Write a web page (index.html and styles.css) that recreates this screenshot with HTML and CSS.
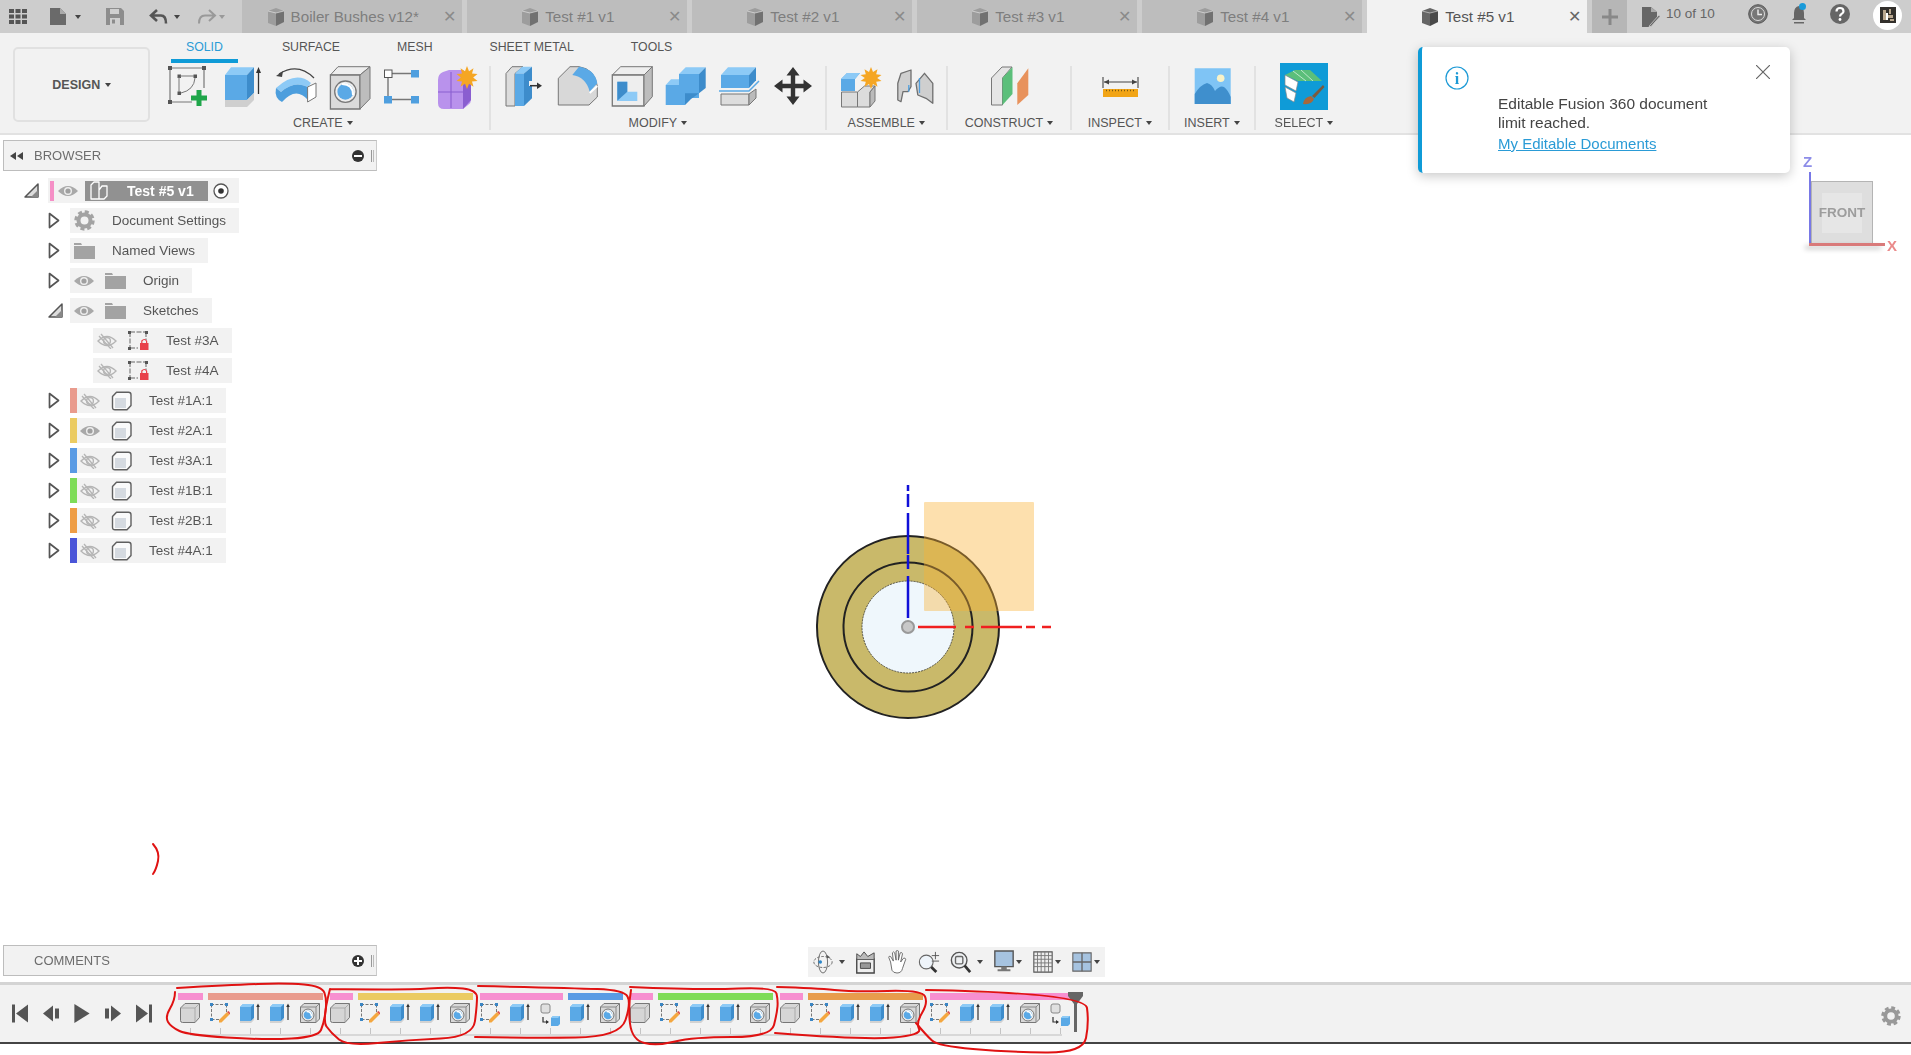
FILE: index.html
```html
<!DOCTYPE html>
<html lang="en">
<head>
<meta charset="utf-8">
<title>Test #5 v1</title>
<link rel="stylesheet" href="styles.css">
</head>
<body>
<svg class="defs" width="0" height="0" aria-hidden="true">
  <symbol id="docicon" viewBox="0 0 20 20"><path d="M2 4 10 1l8 3v11l-8 4-8-3z" fill="currentColor"/><path d="M10 6v13l8-4V4z" fill="#000" opacity=".28"/><path d="M2 4l8 2 8-2" fill="none" stroke="#fff" stroke-width=".7" opacity=".7"/></symbol>
  <symbol id="eye" viewBox="0 0 20 14"><path d="M0 7Q10-3 20 7 10 17 0 7z" fill="#a9a9a9"/><circle cx="10" cy="7" r="4" fill="#eee"/><circle cx="10" cy="7" r="2.6" fill="#a0a0a0"/></symbol>
  <symbol id="eyeoff" viewBox="0 0 20 16"><path d="M1 8Q10-1 19 8 10 17 1 8z" fill="none" stroke="#b5b5b5" stroke-width="1.4"/><circle cx="10" cy="8" r="3.4" fill="none" stroke="#b5b5b5" stroke-width="1.4"/><path d="M4 1l12 14M2 3l12 13" stroke="#b5b5b5" stroke-width="1.3"/></symbol>
  <symbol id="folder" viewBox="0 0 21 16"><path d="M0 0h7l1 2h-8zM0 3h21v13H0z" fill="#a3a3a3"/></symbol>
  <symbol id="twist" viewBox="0 0 12 17"><path d="M1.5 1.5 10.5 8.5 1.5 15.5z" fill="#fff" stroke="#555" stroke-width="1.7" stroke-linejoin="round"/></symbol>
  <symbol id="twistopen" viewBox="0 0 15 15"><path d="M14 1V14H1z" fill="#ddd" stroke="#555" stroke-width="1.5" stroke-linejoin="round"/><path d="M14 7V14H7z" fill="#888"/></symbol>
  <symbol id="compcube" viewBox="0 0 21 20"><path d="M1.500 5.500 5.500 1.200h12q2.500 0 2.500 2.500v10.800l-4 4.300H4q-2.500 0-2.500-2.500z" fill="#fafafa" stroke="#5f5f5f" stroke-width="1.400" stroke-linejoin="round"/><path d="M4 7h11v10H4z" fill="#d5dae0"/></symbol>
  <symbol id="lockedsketch" viewBox="0 0 21 20"><path d="M2 1h16M2 1v16M2 17h8M18 1v8" stroke="#666" stroke-width="1" stroke-dasharray="5 1.500" fill="none"/><path d="M0 0h3v3H0zM17 0h3v3h-3zM0 16h3v3H0z" fill="#555"/><rect x="12" y="12" width="8.500" height="7" fill="#e8404a"/><path d="M13.800 12V10q2.500-3 4.800 0v2" fill="none" stroke="#e8404a" stroke-width="1.200"/></symbol>
  <symbol id="tlcube" viewBox="0 0 20 20"><path d="M.5 5 5 .5h14.500v14l-4.500 5H2.500q-2 0-2-2z" fill="#d6d6d6" stroke="#777"/><path d="M.5 5H15l4.500-4.500M15 5v14.500" fill="none" stroke="#999" stroke-width=".7"/></symbol>
  <symbol id="tlsketch" viewBox="0 0 20 20"><path d="M1 1.500h16M1.500 1.500v15M1.500 16.500h9M16.500 1.500v8" stroke="#777" fill="none" stroke-dasharray="3 1.500"/><path d="M0 0h3v3H0zM15 0h3v3h-3zM0 15h3v3H0z" fill="#3b86c4"/><path d="M9 17 17 9l2.500 2.500-8 8H9z" fill="#f4a740"/><path d="M17 9l2.500 2.500 1-1.500L18.500 8z" fill="#e0504a"/></symbol>
  <symbol id="tlextrude" viewBox="0 0 20 20"><path d="M0 4 3 1h11v14l-3 3H0z" fill="#5aa9e6"/><path d="M0 4 3 1h11l-3 3z" fill="#8dcaf6"/><path d="M11 4l3-3v14l-3 3z" fill="#3d8ccb"/><path d="M0 18h11l3-3v2l-3 3H0z" fill="#d2d2d2"/><path d="M18 17V2" stroke="#333" stroke-width="1.200"/><path d="M16.200 4 18 .5 19.800 4z" fill="#333"/></symbol>
  <symbol id="tlhole" viewBox="0 0 20 20"><path d="M.5 4 4 .5h15.500v15.500l-3.500 3.500H.5z" fill="#d8d8d8" stroke="#777"/><path d="M.5 4H16L19.500.5M16 4v15.500" fill="none" stroke="#888"/><circle cx="8" cy="12" r="6" fill="#eee" stroke="#777"/><circle cx="8" cy="12" r="4.300" fill="#5aa9e6"/><path d="M6.500 8.500q5 0 5 5" fill="none" stroke="#fff" stroke-width="1.500"/></symbol>
  <symbol id="tlmove" viewBox="0 0 20 24"><rect x="1" y="1" width="9" height="9" rx="2" fill="#e0e0e0" stroke="#888"/><path d="M3 14v5h5" fill="none" stroke="#333" stroke-width="1.200"/><path d="M6 17l3 2-3 2z" fill="#333"/><path d="M11 15l2-2h7v8l-2 2h-7z" fill="#5aa9e6"/><path d="M11 15l2-2h7l-2 2z" fill="#8dcaf6"/></symbol>
</svg>

<div class="app">
  <header class="topbar">
    <div class="quick">
      <svg class="qi-grid" viewBox="0 0 18 15"><path d="M0 0h5v4H0zM6.500 0h5v4h-5zM13 0h5v4h-5zM0 5.500h5v4H0zM6.500 5.500h5v4h-5zM13 5.500h5v4h-5zM0 11h5v4H0zM6.500 11h5v4h-5zM13 11h5v4h-5z" fill="#555"/></svg>
      <svg class="qi-file" viewBox="0 0 16 17"><path d="M0 0h10l6 6v11H0z" fill="#6a6a6a"/><path d="M10 0v6h6z" fill="#aaa"/></svg>
      <i class="caret dark"></i>
      <svg class="qi-save" viewBox="0 0 18 17"><path d="M0 0h15l3 3v14H0z" fill="#8d8d8d"/><path d="M4 1h9v5H4z" fill="#cfcfcf"/><path d="M4 10h10v7H4z" fill="#cfcfcf"/><path d="M6 11.500h3v4H6z" fill="#8d8d8d"/></svg>
      <svg class="qi-undo" viewBox="0 0 22 16"><path d="M8 1 2 6.500 8 12M3 6.500h9q5 0 5 8" fill="none" stroke="#555" stroke-width="2.600"/></svg>
      <i class="caret dark"></i>
      <svg class="qi-redo" viewBox="0 0 22 16"><path d="M14 1l6 5.500L14 12M19 6.500h-9q-6 0-6 8" fill="none" stroke="#999" stroke-width="2"/></svg>
      <i class="caret light"></i>
    </div>
    <nav class="doctabs">
      <div class="doctab"><span class="doctab-main"><svg class="doctab-icon"><use href="#docicon"/></svg>Boiler Bushes v12*</span><span class="doctab-x">✕</span></div>
      <div class="doctab"><span class="doctab-main"><svg class="doctab-icon"><use href="#docicon"/></svg>Test #1 v1</span><span class="doctab-x">✕</span></div>
      <div class="doctab"><span class="doctab-main"><svg class="doctab-icon"><use href="#docicon"/></svg>Test #2 v1</span><span class="doctab-x">✕</span></div>
      <div class="doctab"><span class="doctab-main"><svg class="doctab-icon"><use href="#docicon"/></svg>Test #3 v1</span><span class="doctab-x">✕</span></div>
      <div class="doctab"><span class="doctab-main"><svg class="doctab-icon"><use href="#docicon"/></svg>Test #4 v1</span><span class="doctab-x">✕</span></div>
      <div class="doctab active"><span class="doctab-main"><svg class="doctab-icon"><use href="#docicon"/></svg>Test #5 v1</span><span class="doctab-x">✕</span></div>
      <div class="newtab"><svg viewBox="0 0 16 16" width="16" height="16"><path d="M6.500 0h3v6.500H16v3H9.500V16h-3V9.500H0v-3h6.500z" fill="#888"/></svg></div>
    </nav>
    <div class="status">
      <svg class="st-edit" viewBox="0 0 18 20"><path d="M0 0h9l6 5v6L7 20H0z" fill="#666"/><path d="M9 0v5h6z" fill="#aaa"/><path d="M8 18l9-10 1 1.500-9 10H7z" fill="#666" stroke="#cbcbcb" stroke-width=".8"/></svg>
      <span class="st-count">10 of 10</span>
      <svg class="st-clock" viewBox="0 0 20 20"><circle cx="10" cy="10" r="9.300" fill="#777" stroke="#555" stroke-width="1"/><circle cx="10" cy="10" r="6.500" fill="none" stroke="#ddd" stroke-width="1"/><path d="M10 5.500V10.500H14" fill="none" stroke="#eee" stroke-width="1.400"/></svg>
      <svg class="st-bell" viewBox="0 0 20 22"><path d="M10 3q5 1 5 7v5l2 2H3l2-2v-5q0-6 5-7z" fill="#666"/><path d="M5 19h10v1.500H5z" fill="#666"/><circle cx="13.500" cy="3.500" r="3.500" fill="#1a9ad9"/></svg>
      <svg class="st-help" viewBox="0 0 20 20"><circle cx="10" cy="10" r="10" fill="#666"/><path d="M6.500 7.500q0-3.500 3.500-3.500t3.500 3.200q0 1.800-2 2.800-1.500.8-1.500 2.500" fill="none" stroke="#fff" stroke-width="2.200"/><circle cx="10" cy="15.500" r="1.400" fill="#fff"/></svg>
      <div class="avatar"><svg viewBox="0 0 16 16" width="16" height="16"><path d="M0 0h16v16H0z" fill="#33302c"/><path d="M3 3h3v10H3zM9 2h2v5H9zM8 8h5v3H8zM10 12h4v2h-4z" fill="#b9a78f"/><path d="M6 6h2v7H6z" fill="#fff"/></svg></div>
    </div>
  </header>

  <section class="toolbar">
    <button class="workspace">DESIGN <i class="caret dark"></i></button>
    <div class="ribbon">
      <div class="ribbon-tabs">
        <span class="rtab on">SOLID</span><span class="rtab">SURFACE</span><span class="rtab">MESH</span><span class="rtab">SHEET METAL</span><span class="rtab">TOOLS</span>
      </div>
      <div class="groups">
        <div class="group g-create">
          <div class="tools narrow">
            <svg class="tool" viewBox="0 0 44 44"><path d="M3 2h34M3 2v34M3 36h22M37 2v20" stroke="#777" stroke-width="1.200" fill="none"/><path d="M1 0h4v4H1zM35 0h4v4h-4zM1 34h4v4H1zM10.500 8.500h3.500v3.500h-3.500zM26.500 8.500H30v3.500h-3.500zM10.500 25.500h3.500V29h-3.500z" fill="#555"/><path d="M12 11v15M13 10h14M28 12Q27 24 14 27" fill="none" stroke="#777"/><path d="M32 24v16M24 32h16" stroke="#1fa64a" stroke-width="5"/></svg>
            <svg class="tool" viewBox="0 0 44 44"><path d="M4 9 10 1.300h23L26 9z" fill="#8dcaf6"/><path d="M4 9h22v25H4z" fill="#5aa9e6"/><path d="M26 9l7-7.700V27l-7 7z" fill="#3d8ccb"/><path d="M4 34h22l7-7v7l-7 7H4z" fill="#cfcfcf"/><path d="M37.500 28V4" stroke="#333" stroke-width="1.300"/><path d="M35 7l2.500-6L40 7z" fill="#333"/></svg>
            <svg class="tool" viewBox="0 0 44 44"><path d="M2 22Q22 4 37 17L34 21Q20 14 7 26z" fill="#8dcaf6"/><path d="M2 22 7 26Q20 14 34 21V34Q22 20 8 36 0 32 2 22z" fill="#4c9edd"/><path d="M33.600 21 42 17v14l-8.400 5z" fill="#fff" stroke="#777"/><path d="M40 12Q24-4 5 8" fill="none" stroke="#444" stroke-width="1.300"/><path d="M2 10l7-5-1 6z" fill="#444"/></svg>
            <svg class="tool" viewBox="0 0 44 44"><path d="M2.400 9 10 .7h32L32 9z" fill="#eee" stroke="#777"/><path d="M2.400 9H32v34H2.400z" fill="#dbdbdb" stroke="#777" stroke-width="1.300"/><path d="M32 9 42 .7v32L32 43z" fill="#bdbdbd" stroke="#777"/><circle cx="17.400" cy="25.700" r="10.700" fill="#eee" stroke="#777" stroke-width="1.300"/><circle cx="17.400" cy="25.700" r="8" fill="#5aa9e6"/><path d="M14 18q11 0 11 11" fill="none" stroke="#fff" stroke-width="2"/></svg>
            <svg class="tool" viewBox="0 0 44 44"><path d="M11 7.500h19M7 11.500v19M11 33.500h19" stroke="#777" stroke-width="1.400"/><rect x="3.500" y="4" width="7.500" height="7.500" fill="#fff" stroke="#555"/><path d="M30 4h8v7.500h-8zM3 30h8v7.500H3zM30 30h8v7.500h-8z" fill="#4f9fdf"/></svg>
            <svg class="tool" viewBox="0 0 44 44"><path d="M3 14Q3 8 8 6L14 4h14l8 8v22q0 3-3 5l-5 4H9q-6 0-6-6z" fill="#b992ec"/><path d="M28 14l8-2v22l-8 9z" fill="#8a5ed0"/><path d="M3 26h25M16 6v36" stroke="#8a5ed0" stroke-width="1.100" fill="none"/><path d="M32 0l2 5.200 4.500-3-1.500 5.300 5.500.5-4.300 3.500 4.300 3.500-5.500.5 1.500 5.300-4.500-3-2 5.200-2-5.200-4.500 3 1.500-5.300-5.500-.5 4.300-3.500-4.300-3.500 5.500-.5-1.500-5.300 4.500 3z" fill="#f5a623"/></svg>
          </div>
          <div class="glabel">CREATE <i class="caret dark"></i></div>
        </div>
        <div class="group g-modify">
          <div class="tools">
            <svg class="tool" viewBox="0 0 44 44"><path d="M5 7.500 11 .7h11L14 7.500V40H5z" fill="#dcdcdc" stroke="#777"/><path d="M14 7.500 21 .7h10l-8 6.800z" fill="#8dcaf6"/><path d="M14 7.500h9V40h-9z" fill="#5aa9e6"/><path d="M23 7.500l8-6.800v31.600L23 40z" fill="#3d8ccb"/><path d="M28 17.500h9" stroke="#f2f2f2" stroke-width="5"/><path d="M29 19.700h8" stroke="#333" stroke-width="1.500"/><path d="M36 16.500l5 3.200-5 3.200z" fill="#333"/></svg>
            <svg class="tool" viewBox="0 0 44 44"><path d="M3.300 12.300 15 .7h9Q40 3 42.300 20v11L34 39H3.300z" fill="#d8d8d8" stroke="#777"/><path d="M17.300 9 24 .7Q40 3 42.300 17.300L34.700 25.700Q31 11 17.300 9z" fill="#5aa9e6"/><path d="M34.700 27 42.300 20" stroke="#fff" stroke-width="2"/></svg>
            <svg class="tool" viewBox="0 0 44 44"><path d="M3.300 9 11.700.7h31.600L35 9z" fill="#eee" stroke="#777"/><path d="M3.300 9H35v31H3.300z" fill="#eee" stroke="#777" stroke-width="1.300"/><path d="M35 9l8.300-8.300v30L35 40z" fill="#bdbdbd" stroke="#777"/><path d="M8.300 15.700h10v10h10v9.300H8.300z" fill="#8dcaf6"/><path d="M8.300 15.700h10v10l-10 9z" fill="#3d8ccb"/></svg>
            <svg class="tool" viewBox="0 0 44 44"><path d="M16 8 22.700 1.300h20L36 8z" fill="#8dcaf6"/><path d="M16 8h20v24H16z" fill="#5aa9e6"/><path d="M36 8l6.700-6.700V22L36 27.300z" fill="#3d8ccb"/><path d="M2.700 19 8 13.300h8V19z" fill="#8dcaf6"/><path d="M2.700 19H22v20H2.700z" fill="#5aa9e6"/><path d="M22 27.300h14L28 33l-6 6z" fill="#3d8ccb"/></svg>
            <svg class="tool" viewBox="0 0 44 44"><path d="M4 9 11 1.300h28L32 9z" fill="#8dcaf6"/><path d="M4 9h28v13H4z" fill="#5aa9e6"/><path d="M32 9l7-7.700v13L32 22z" fill="#3d8ccb"/><path d="M2 25H32L42 15" fill="none" stroke="#5aa9e6" stroke-width="1.500"/><path d="M4 28H32V39H4z" fill="#ddd" stroke="#777"/><path d="M32 28l7-5v9l-7 7z" fill="#bbb" stroke="#777"/></svg>
            <svg class="tool" viewBox="0 0 44 44"><path d="M22 1l6.500 8.500H24.200v8.300h8.300v-4.300L41 20l-8.500 6.500v-4.300h-8.300v8.300h4.300L22 39l-6.500-8.500h4.300v-8.300h-8.300v4.300L3 20l8.500-6.500v4.300h8.300V9.500h-4.300z" fill="#333"/></svg>
          </div>
          <div class="glabel">MODIFY <i class="caret dark"></i></div>
        </div>
        <div class="group">
          <div class="tools">
            <svg class="tool" viewBox="0 0 44 44"><path d="M3 25V13l6-6h13l-5 6v12z" fill="#5aa9e6"/><path d="M3 13l6-6h13l-5 6z" fill="#8dcaf6"/><path d="M3.500 26h16v15h-16z" fill="#dcdcdc" stroke="#777"/><path d="M19.500 26l7-6h10.500l-5 6v15h-12.500z" fill="#dcdcdc" stroke="#777"/><path d="M32 26l5-6v15l-5 6z" fill="#bbb" stroke="#777"/><path d="M33 1l2 5 4.500-2.800-1.300 5 5.300.8-4.300 3 4.300 3-5.300.8 1.300 5-4.500-2.800-2 5-2-5-4.500 2.800 1.300-5-5.300-.8 4.300-3-4.300-3 5.300-.8-1.300-5L31 6z" fill="#f5a623"/></svg>
            <svg class="tool" viewBox="0 0 44 44"><path d="M5.800 17.300 9 7.300 19 4v16.700l-3 5H11L9 35.700 5.800 34z" fill="#cfcfcf" stroke="#6f6f6f" stroke-width="1.300" stroke-linejoin="round"/><path d="M24 17.300 32.500 7.300l8.300 10v20l-6.800-5-8.200-3.300z" fill="#cfcfcf" stroke="#6f6f6f" stroke-width="1.300" stroke-linejoin="round"/><path d="M16.800 19v6.700M27.500 12v15" stroke="#4f9fdf" stroke-width="1.300"/></svg>
          </div>
          <div class="glabel">ASSEMBLE <i class="caret dark"></i></div>
        </div>
        <div class="group">
          <div class="tools">
            <svg class="tool" viewBox="0 0 44 44"><path d="M4.500 12 15 1h10L15.500 12v27h-11z" fill="#e5e5e5" stroke="#777"/><path d="M15.500 12 25.500 1v27l-10 11z" fill="#5bbf7a"/><path d="M30.300 17.300 41.300 2.300v26.700L30.300 39z" fill="#e8925c"/></svg>
          </div>
          <div class="glabel">CONSTRUCT <i class="caret dark"></i></div>
        </div>
        <div class="group">
          <div class="tools">
            <svg class="tool" viewBox="0 0 44 44"><path d="M5 11v11M40 11v11M6 16h33" stroke="#444" stroke-width="1.100"/><path d="M6 16l5-2.500v5zM39 16l-5-2.500v5z" fill="#444"/><path d="M5 23h35v8H5z" fill="#f2a516"/><path d="M8 24.500h29" stroke="#7a5a10" stroke-dasharray="1 2" stroke-width="1.500"/></svg>
          </div>
          <div class="glabel">INSPECT <i class="caret dark"></i></div>
        </div>
        <div class="group">
          <div class="tools">
            <svg class="tool" viewBox="0 0 44 44"><path d="M4.700 2.300h36V38h-36z" fill="#7fc4f5"/><path d="M4.700 38V28Q10 19 17 17q5 1 8 8 5-6 9-4 4 3 6.700 10v7z" fill="#3f8fcd"/><circle cx="30.700" cy="12.300" r="3.800" fill="#f8f2c8"/></svg>
          </div>
          <div class="glabel">INSERT <i class="caret dark"></i></div>
        </div>
        <div class="group">
          <div class="tools">
            <svg class="tool-select" viewBox="0 0 48 47"><path d="M0 0h48v47H0z" fill="#0f9bd7"/><path d="M5 12 15 7h15l12 11H18z" fill="#5bbf7a"/><path d="M13 8l13 10M21 7l12 11" stroke="#d5f0dd" stroke-width=".8"/><path d="M5 12l13 7-2 9-11-6zM5 24l11 6-2 9-7-4z" fill="#fff" stroke="#888" stroke-width=".7"/><path d="M32 33 43 22l1.500 2-10 11z" fill="#7c5a3c"/><path d="M23 41q1-7 8-8l3 3q-2 6-11 5z" fill="#a8683a"/></svg>
          </div>
          <div class="glabel">SELECT <i class="caret dark"></i></div>
        </div>
      </div>
    </div>
  </section>

  <main class="stage">
    <aside class="panel panel-browser">
      <svg class="collapse" viewBox="0 0 13 8"><path d="M6 0v8L0 4zM13 0v8L7 4z" fill="#444"/></svg>
      <span class="panel-title">BROWSER</span>
      <i class="pill minus"></i><i class="grip"></i>
    </aside>
    <div class="tree">
      <div class="row root">
        <svg class="twist-open"><use href="#twistopen"/></svg>
        <div class="node node-root">
          <i class="swatch-root"></i>
          <svg class="ic-eye"><use href="#eye"/></svg>
          <div class="selected">
            <svg class="comp-ic" viewBox="0 0 18 19"><path d="M1 4 4 1h5v17H1zM9 9l3-4h5v10l-3 3H9z" fill="#8f8f8f" stroke="#fff" stroke-width="1.300" stroke-linejoin="round"/></svg>
            <span>Test #5 v1</span>
          </div>
          <svg class="radio" viewBox="0 0 16 16"><circle cx="8" cy="8" r="7" fill="#fff" stroke="#555" stroke-width="1.300"/><circle cx="8" cy="8" r="2.800" fill="#333"/></svg>
        </div>
      </div>
      <div class="row l1">
        <svg class="twist"><use href="#twist"/></svg>
        <div class="node">
          <svg class="ic-gear" viewBox="0 0 21 21"><circle cx="10.500" cy="10.500" r="6" fill="none" stroke="#a3a3a3" stroke-width="4"/><circle cx="10.500" cy="10.500" r="8.700" fill="none" stroke="#a3a3a3" stroke-width="3" stroke-dasharray="4 2.830"/></svg>
          <span class="label">Document Settings</span>
        </div>
      </div>
      <div class="row l1">
        <svg class="twist"><use href="#twist"/></svg>
        <div class="node"><svg class="ic-folder first"><use href="#folder"/></svg><span class="label">Named Views</span></div>
      </div>
      <div class="row l1">
        <svg class="twist"><use href="#twist"/></svg>
        <div class="node"><svg class="ic-eye"><use href="#eye"/></svg><svg class="ic-folder"><use href="#folder"/></svg><span class="label">Origin</span></div>
      </div>
      <div class="row l1">
        <svg class="twist-open small"><use href="#twistopen"/></svg>
        <div class="node"><svg class="ic-eye"><use href="#eye"/></svg><svg class="ic-folder"><use href="#folder"/></svg><span class="label">Sketches</span></div>
      </div>
      <div class="row l2">
        <div class="node"><svg class="ic-eye"><use href="#eyeoff"/></svg><svg class="ic-item"><use href="#lockedsketch"/></svg><span class="label">Test #3A</span></div>
      </div>
      <div class="row l2">
        <div class="node"><svg class="ic-eye"><use href="#eyeoff"/></svg><svg class="ic-item"><use href="#lockedsketch"/></svg><span class="label">Test #4A</span></div>
      </div>
      <div class="row l1">
        <svg class="twist"><use href="#twist"/></svg>
        <div class="node body"><i class="swatch c-salmon"></i><svg class="ic-eye"><use href="#eyeoff"/></svg><svg class="ic-item"><use href="#compcube"/></svg><span class="label">Test #1A:1</span></div>
      </div>
      <div class="row l1">
        <svg class="twist"><use href="#twist"/></svg>
        <div class="node body"><i class="swatch c-yellow"></i><svg class="ic-eye"><use href="#eye"/></svg><svg class="ic-item"><use href="#compcube"/></svg><span class="label">Test #2A:1</span></div>
      </div>
      <div class="row l1">
        <svg class="twist"><use href="#twist"/></svg>
        <div class="node body"><i class="swatch c-blue"></i><svg class="ic-eye"><use href="#eyeoff"/></svg><svg class="ic-item"><use href="#compcube"/></svg><span class="label">Test #3A:1</span></div>
      </div>
      <div class="row l1">
        <svg class="twist"><use href="#twist"/></svg>
        <div class="node body"><i class="swatch c-green"></i><svg class="ic-eye"><use href="#eyeoff"/></svg><svg class="ic-item"><use href="#compcube"/></svg><span class="label">Test #1B:1</span></div>
      </div>
      <div class="row l1">
        <svg class="twist"><use href="#twist"/></svg>
        <div class="node body"><i class="swatch c-orange"></i><svg class="ic-eye"><use href="#eyeoff"/></svg><svg class="ic-item"><use href="#compcube"/></svg><span class="label">Test #2B:1</span></div>
      </div>
      <div class="row l1">
        <svg class="twist"><use href="#twist"/></svg>
        <div class="node body"><i class="swatch c-indigo"></i><svg class="ic-eye"><use href="#eyeoff"/></svg><svg class="ic-item"><use href="#compcube"/></svg><span class="label">Test #4A:1</span></div>
      </div>
    </div>

    <div class="stage-bottom">
      <aside class="panel panel-comments">
        <span class="panel-title">COMMENTS</span>
        <i class="pill plus"></i><i class="grip"></i>
      </aside>
      <div class="navbar">
        <svg class="nv" viewBox="0 0 24 26"><ellipse cx="12" cy="13" rx="10" ry="6" fill="none" stroke="#666" stroke-dasharray="3 1.500"/><ellipse cx="12" cy="13" rx="5" ry="12" fill="none" stroke="#666"/><circle cx="9" cy="13" r="2" fill="#2b86c9"/><path d="M16 5l4 3-4 1z" fill="#555"/></svg><i class="caret dark tight"></i>
        <svg class="nv" viewBox="0 0 24 26"><path d="M3 10h19v15H3z" fill="#eee" stroke="#444" stroke-width="1.500"/><path d="M7 14h11v6H7z" fill="#999" stroke="#444"/><path d="M3 10V4l4 3 4-5 4 5 7-4v7" fill="#bbb" stroke="#444"/></svg>
        <svg class="nv" viewBox="0 0 24 26"><path d="M5 13 3 8q0-2 2-1l3 5L7 3q1-2 2.500 0l1.500 8V1q1.500-1 2.500 0v10l2-8q2-1 2.500 1L16 13l3-4q2-1 2.500 1L18 20q-1 5-6 5-4 0-5.500-3z" fill="#fff" stroke="#555" stroke-width=".9" stroke-linejoin="round"/></svg>
        <svg class="nv" viewBox="0 0 24 26"><circle cx="9" cy="13" r="7.500" fill="#eef4fa" stroke="#666" stroke-width="1.200"/><path d="M14.500 18.500 20 24" stroke="#333" stroke-width="3"/><path d="M15 6h8M19 2v8M15 12h8" stroke="#555" stroke-width="1"/></svg>
        <svg class="nv" viewBox="0 0 24 26"><circle cx="10" cy="11" r="8.500" fill="#eef0f2" stroke="#555" stroke-width="1.500"/><rect x="6" y="7" width="8" height="8" rx="1.500" fill="none" stroke="#666" stroke-width="1.500"/><path d="M16 17l6 7" stroke="#333" stroke-width="3"/></svg><i class="caret dark tight2"></i>
        <svg class="nv" viewBox="0 0 24 26"><path d="M2 1h20v17H2z" fill="#a6c3e0" stroke="#555" stroke-width="1.500"/><path d="M9 18h6v3h4v2H5v-2h4z" fill="#777"/></svg><i class="caret dark tight3"></i>
        <svg class="nv" viewBox="0 0 24 26"><path d="M2 2h20v22H2z" fill="#eee" stroke="#555" stroke-width="1.200"/><path d="M6 2v22M10 2v22M14 2v22M18 2v22M2 6h20M2 10h20M2 14h20M2 18h20" stroke="#777"/></svg><i class="caret dark tight3"></i>
        <svg class="nv" viewBox="0 0 24 26"><path d="M2 3h20v20H2z" fill="#a6c3e0" stroke="#666" stroke-width="1.200"/><path d="M12 3v20M2 13h20" stroke="#666" stroke-width="1.500"/></svg><i class="caret dark tight3"></i>
      </div>
    </div>

    <svg class="drawing" viewBox="0 0 200 210" aria-label="Sketch canvas">
      <circle cx="100" cy="105" r="91" fill="#c9b96a" stroke="#222" stroke-width="2"/>
      <circle cx="100" cy="105" r="64.500" fill="none" stroke="#222" stroke-width="2"/>
      <circle cx="100" cy="105" r="46" fill="#eff7fc" stroke="#333" stroke-width=".8" stroke-dasharray="2 1"/>
      <rect x="116" y="-20" width="110" height="109" rx="1" fill="#f9b234" opacity=".4"/>
      <path d="M100 -37V96" stroke="#1010d8" stroke-width="2.500" stroke-dasharray="6 3 13 6 41 1 14 7 42"/>
      <path d="M110 105H243" stroke="#f02020" stroke-width="2.500" stroke-dasharray="38 9 9 7 41 4 9 7 9"/>
      <circle cx="100" cy="105" r="6" fill="#c8c8c8" stroke="#999" stroke-width="2"/>
    </svg>

    <div class="notice">
      <svg class="notice-i" viewBox="0 0 24 24"><circle cx="12" cy="12" r="11" fill="#fff" stroke="#1d9ad6" stroke-width="1.200"/><text x="12" y="18" text-anchor="middle" class="notice-i-text">i</text></svg>
      <svg class="notice-x" viewBox="0 0 14 14"><path d="M0 0 14 14M14 0 0 14" stroke="#666" stroke-width="1.200"/></svg>
      <p class="notice-text">Editable Fusion 360 document<br>limit reached.</p>
      <a class="notice-link" href="#">My Editable Documents</a>
    </div>

    <div class="viewcube">
      <span class="vc-z">Z</span>
      <div class="vc-face"><span>FRONT</span></div>
      <i class="vc-zaxis"></i>
      <i class="vc-xaxis"></i>
      <span class="vc-x">X</span>
    </div>
  </main>

  <footer class="timeline">
    <div class="playback">
      <svg class="pb" viewBox="0 0 16 18"><path d="M0 0h3v18H0zM16 0v18L4 9z" fill="#555"/></svg>
      <svg class="pb" viewBox="0 0 16 18"><path d="M10 1v16L0 9z" fill="#555"/><path d="M12 4h4v10h-4z" fill="#555"/></svg>
      <svg class="pb" viewBox="0 0 16 20"><path d="M0 0l16 10L0 20z" fill="#555"/></svg>
      <svg class="pb" viewBox="0 0 16 18"><path d="M6 1v16l10-8z" fill="#555"/><path d="M0 4h4v10H0z" fill="#555"/></svg>
      <svg class="pb" viewBox="0 0 16 18"><path d="M0 0v18l12-9zM13 0h3v18h-3z" fill="#555"/></svg>
    </div>
    <div class="track">
      <div class="segs">
        <i class="seg w25 c-pink"></i><i class="seg w115 c-salmon end"></i>
        <i class="seg w23 c-pink"></i><i class="seg w115 c-yellow end"></i>
        <i class="seg w83 c-pink"></i><i class="seg w55 c-blue end"></i>
        <i class="seg w23 c-pink"></i><i class="seg w115 c-green end"></i>
        <i class="seg w23 c-pink"></i><i class="seg w115 c-orange2 end"></i>
        <i class="seg w141 c-pink"></i>
      </div>
      <div class="feats">
        <svg class="ft"><use href="#tlcube"/></svg><svg class="ft"><use href="#tlsketch"/></svg><svg class="ft"><use href="#tlextrude"/></svg><svg class="ft"><use href="#tlextrude"/></svg><svg class="ft"><use href="#tlhole"/></svg>
        <svg class="ft"><use href="#tlcube"/></svg><svg class="ft"><use href="#tlsketch"/></svg><svg class="ft"><use href="#tlextrude"/></svg><svg class="ft"><use href="#tlextrude"/></svg><svg class="ft"><use href="#tlhole"/></svg>
        <svg class="ft"><use href="#tlsketch"/></svg><svg class="ft"><use href="#tlextrude"/></svg><svg class="ft tall"><use href="#tlmove"/></svg><svg class="ft"><use href="#tlextrude"/></svg><svg class="ft"><use href="#tlhole"/></svg>
        <svg class="ft"><use href="#tlcube"/></svg><svg class="ft"><use href="#tlsketch"/></svg><svg class="ft"><use href="#tlextrude"/></svg><svg class="ft"><use href="#tlextrude"/></svg><svg class="ft"><use href="#tlhole"/></svg>
        <svg class="ft"><use href="#tlcube"/></svg><svg class="ft"><use href="#tlsketch"/></svg><svg class="ft"><use href="#tlextrude"/></svg><svg class="ft"><use href="#tlextrude"/></svg><svg class="ft"><use href="#tlhole"/></svg>
        <svg class="ft"><use href="#tlsketch"/></svg><svg class="ft"><use href="#tlextrude"/></svg><svg class="ft"><use href="#tlextrude"/></svg><svg class="ft"><use href="#tlhole"/></svg><svg class="ft tall"><use href="#tlmove"/></svg>
      </div>
      <div class="ruler"></div>
      <svg class="marker" viewBox="0 0 15 40"><path d="M0 0h15v4l-6 8v28H6V12L0 4z" fill="#666"/></svg>
    </div>
    <svg class="tl-gear" viewBox="0 0 21 21"><circle cx="10.500" cy="10.500" r="6" fill="none" stroke="#999" stroke-width="4"/><circle cx="10.500" cy="10.500" r="8.700" fill="none" stroke="#999" stroke-width="3" stroke-dasharray="4 2.830"/></svg>
  </footer>
  <div class="foot"></div>

  <svg class="ink" viewBox="0 0 1911 1055" aria-hidden="true">
    <path d="M153 844Q160 852 158 861T153 874"/>
    <path d="M177 988Q230 985 258 984Q286 983 304 984.500Q322 986 324.500 993Q327 1000 325.500 1011.500Q324 1023 321 1030Q318 1037 291.500 1038.500Q265 1040 226.500 1037.500Q188 1035 179.500 1031Q171 1027 168 1022Q165 1017 170 1008.500Q175 1000 175 992"/>
    <path d="M330 989Q408 990 428 988.500Q449 987 463 988.500Q477 990 477 997.500Q477 1005 475 1021Q473 1037 440.500 1038.500Q408 1040 377.500 1043Q347 1046 339 1039.500Q331 1033 326.500 1026.500Q322 1020 330 989"/>
    <path d="M478 986Q571 988 597.500 989Q624 990 627.500 996.500Q631 1003 625.500 1020Q620 1037 575.500 1037.500Q531 1038 475 1037"/>
    <path d="M630 987Q702 990 738.500 988.500Q775 987 776.500 993.500Q778 1000 777.500 1006.500Q777 1013 774 1025Q771 1037 732 1037Q693 1037 675 1041.500Q657 1046 644.500 1043Q632 1040 630 1023.500Q628 1007 631 990"/>
    <path d="M777 987Q816 988 834.500 990Q853 992 887.500 991Q922 990 925 996.500Q928 1003 922 1013Q916 1023 919 1029Q922 1035 893.500 1037.500Q865 1040 775 1033"/>
    <path d="M926 990Q1085 993 1087 1008Q1089 1023 1086 1038Q1083 1053 1045.500 1052.500Q1008 1052 973 1049Q938 1046 932 1040.500Q926 1035 916 1023"/>
  </svg>
</div>
</body>
</html>
```

FILE: styles.css
```css
* { box-sizing: border-box; }
html, body { margin: 0; padding: 0; background: #fff; }
body { font-family: "Liberation Sans", Arial, sans-serif; color: #555; }
i { display: block; }
.defs { position: absolute; }

.app { position: relative; width: 1911px; height: 1055px; overflow: hidden; display: flex; flex-direction: column; filter: blur(.3px); }

.caret { display: inline-block; width: 0; height: 0; border-left: 3px solid transparent; border-right: 3px solid transparent; border-top: 4px solid #444; vertical-align: 2px; margin-left: 1px; }
.caret.light { border-top-color: #9a9a9a; }

/* top bar */
.topbar { height: 33px; flex: none; display: flex; background: #cdcdcd; }
.quick { width: 242px; flex: none; display: flex; align-items: center; padding-left: 9px; }
.quick svg { flex: none; }
.qi-grid { width: 18px; height: 15px; margin-right: 23px; }
.qi-file { width: 16px; height: 17px; margin-right: 9px; }
.qi-save { width: 18px; height: 17px; margin-left: 25px; margin-right: 25px; }
.qi-undo { width: 22px; height: 16px; margin-right: 3px; }
.qi-redo { width: 22px; height: 16px; margin-left: 15px; margin-right: 2px; }
.quick .caret { margin-left: 0; vertical-align: 0; }
.doctabs { display: flex; gap: 5.500px; }
.doctab { width: 219.500px; height: 33px; display: flex; align-items: center; background: #bdbdbd; color: #7e7e7e; font-size: 15.200px; padding-right: 7px; }
.doctab.active { background: #f2f2f2; color: #555; }
.doctab-main { flex: 1; display: flex; align-items: center; justify-content: center; }
.doctab-icon { width: 20px; height: 20px; margin-right: 5px; color: #9d9d9d; }
.active .doctab-icon { color: #666; }
.doctab-x { width: 12px; font-size: 16px; text-align: center; color: #8a8a8a; }
.active .doctab-x { color: #666; }
.newtab { width: 35px; height: 33px; background: #b6b6b6; display: flex; align-items: center; justify-content: center; }
.status { display: flex; align-items: center; padding-left: 15px; height: 33px; }
.st-edit { width: 18px; height: 20px; margin-right: 6px; }
.st-count { font-size: 13.500px; width: 50px; color: #666; margin-bottom: 6px; }
.st-clock { width: 20px; height: 20px; margin-left: 32px; margin-bottom: 6px; }
.st-bell { width: 20px; height: 22px; margin-left: 21px; margin-bottom: 6px; }
.st-help { width: 20px; height: 20px; margin-left: 21px; margin-bottom: 6px; }
.avatar { width: 29px; height: 29px; margin-left: 23px; margin-bottom: 3px; border-radius: 50%; background: #fff; display: flex; align-items: center; justify-content: center; }

/* ribbon */
.toolbar { height: 102px; flex: none; display: flex; background: #f2f2f2; border-bottom: 2px solid #e2e2e2; }
.workspace { width: 137px; height: 75px; margin: 14px 0 0 13px; background: #f2f2f2; border: 2px solid #e1e1e1; border-radius: 5px; font: bold 12.500px "Liberation Sans", Arial, sans-serif; color: #555; }
.ribbon { margin-left: 13px; }
.ribbon-tabs { display: flex; gap: 27px; height: 30px; padding-left: 8px; }
.rtab { height: 30px; padding: 6px 15px 0; font-size: 12.300px; line-height: 16px; color: #555; }
.rtab.on { color: #2a9bd6; border-bottom: 4px solid #0f9bd7; margin-right: 2px; }
.groups { display: flex; margin-top: 3px; }
.group { display: flex; flex-direction: column; align-items: center; height: 64px; border-right: 2px solid #e2e2e2; }
.group:last-child { border-right: 0; }
.g-create { width: 328px; padding-right: 6px; }
.g-modify { width: 336px; }
.group:nth-child(3) { width: 121px; }
.group:nth-child(4) { width: 124px; }
.group:nth-child(5) { width: 98px; }
.group:nth-child(6) { width: 86px; }
.group:nth-child(7) { width: 96px; }
.tools { display: flex; height: 44px; align-items: center; }
.tool { width: 44px; height: 44px; margin: 0 5px; overflow: visible; flex: none; }
.tools.narrow .tool { margin: 0 4.750px; }
.tool-select { width: 48px; height: 47px; flex: none; margin-top: -3px; }
.glabel { margin-top: 5px; font-size: 12.500px; line-height: 16px; color: #555; white-space: nowrap; }

/* stage */
.stage { position: relative; height: 847px; flex: none; display: flex; flex-direction: column; }
.panel { width: 374px; height: 31px; flex: none; margin-left: 3px; display: flex; align-items: center; background: #f2f2f2; border: 1px solid #bdbdbd; border-right-color: #ccc; }
.panel-browser { margin-top: 5px; }
.collapse { width: 13px; height: 8px; margin-left: 6px; }
.panel-title { font-size: 13px; color: #6d6d6d; margin-left: 11px; }
.panel-comments .panel-title { margin-left: 30px; }
.pill { width: 12px; height: 12px; border-radius: 50%; background: #333; margin-left: auto; position: relative; }
.pill.minus::after { content: ""; position: absolute; left: 2px; right: 2px; top: 5px; height: 2px; background: #fff; }
.pill.plus::after { content: ""; position: absolute; left: 2px; right: 2px; top: 5px; height: 2px; background: #fff; }
.pill.plus::before { content: ""; position: absolute; top: 2px; bottom: 2px; left: 5px; width: 2px; background: #fff; }
.grip { width: 3px; height: 12px; margin: 0 2px 0 7px; border-left: 1px solid #999; border-right: 1px solid #bbb; }

.tree { padding-top: 7px; flex: 1; }
.row { display: flex; align-items: center; height: 25px; margin-bottom: 5px; }
.root { padding-left: 24px; }
.l1 { padding-left: 48px; }
.l2 { padding-left: 93px; }
.twist { width: 12px; height: 17px; flex: none; }
.twist-open { width: 15px; height: 15px; flex: none; margin-right: 9px; }
.twist-open.small { margin-right: 7px; }
.node { height: 25px; display: flex; align-items: center; gap: 11px; background: #f2f2f2; padding: 0 13px 0 4px; font-size: 13.500px; color: #555; }
.twist + .node { margin-left: 10px; }
.label { margin-left: 6px; white-space: nowrap; }
.ic-eye { width: 20px; height: 16px; flex: none; }
.ic-folder { width: 21px; height: 16px; flex: none; }
.ic-item { width: 21px; height: 20px; flex: none; }
.ic-gear { width: 21px; height: 21px; flex: none; }
.node.body { padding-left: 0; }
.swatch { width: 7px; height: 25px; margin-right: -8px; flex: none; }
.node-root { padding: 0 10px 0 2px; gap: 0; width: 191px; }
.swatch-root { width: 4px; height: 20px; background: #f58fc6; margin-right: 4px; }
.node-root .ic-eye { margin-right: 7px; }
.selected { width: 123px; height: 20px; background: #919191; display: flex; align-items: center; padding-left: 5px; color: #fff; font-weight: bold; font-size: 14px; }
.comp-ic { width: 18px; height: 19px; margin-right: 19px; }
.radio { width: 16px; height: 16px; margin-left: 5px; }

.c-pink { background: #f78fd0; }
.c-salmon { background: #e99b8d; }
.c-yellow { background: #ebcb62; }
.c-blue { background: #5a9be4; }
.c-green { background: #7edc58; }
.c-orange { background: #ee9d45; }
.c-orange2 { background: #e89c4c; }
.c-indigo { background: #4a55d8; }

.stage-bottom { display: flex; height: 32px; margin-bottom: 5px; flex: none; }
.navbar { margin-left: 431px; width: 297px; height: 30px; margin-top: 2px; padding-left: 4px; display: flex; align-items: center; gap: 10px; background: #f2f2f2; }
.nv { width: 22px; height: 24px; flex: none; }
.tight { margin: 0 -1px 0 -5px; }
.tight2 { margin: 0 0 0 -5px; }
.tight3 { margin: 0 0 0 -9px; }

.drawing { position: absolute; left: 808px; top: 387px; width: 200px; height: 210px; overflow: visible; }

.notice { position: absolute; left: 1418px; top: -88px; width: 372px; height: 126px; background: #fff; border-left: 4px solid #0f9bd7; border-radius: 5px; box-shadow: 0 3px 12px rgba(0,0,0,.22); padding: 47px 0 0 76px; }
.notice-i { position: absolute; left: 23px; top: 19px; width: 24px; height: 24px; }
.notice-i-text { font: bold 16px "Liberation Serif", serif; fill: #1d9ad6; }
.notice-x { position: absolute; right: 20px; top: 18px; width: 14px; height: 14px; }
.notice-text { margin: 0; font-size: 15.500px; line-height: 19px; color: #444; }
.notice-link { display: block; margin-top: 2px; font-size: 15px; line-height: 19px; color: #2a9bd6; text-decoration: underline; }

.viewcube { position: absolute; left: 1800px; top: 18px; width: 105px; height: 100px; }
.vc-z { position: absolute; left: 3px; top: 0; font: bold 15px "Liberation Sans", sans-serif; color: #8d8de8; }
.vc-face { position: absolute; left: 11px; top: 28px; width: 62px; height: 63px; background: #dedede; border: 1px solid #b4b4b4; display: flex; align-items: center; justify-content: center; }
.vc-face span { background: #e6e6e6; width: 40px; height: 40px; display: flex; align-items: center; justify-content: center; font: bold 13.500px "Liberation Sans", sans-serif; color: #9d9d9d; }
.vc-zaxis { position: absolute; left: 9px; top: 19px; width: 2px; height: 73px; background: #7878e6; }
.vc-xaxis { position: absolute; left: 9px; top: 90px; width: 76px; height: 3px; background: #d97a7a; box-shadow: -4px 3px 5px rgba(0,0,0,.25); }
.vc-x { position: absolute; left: 87px; top: 84px; font: bold 15px "Liberation Sans", sans-serif; color: #ea8a8a; }

/* timeline */
.timeline { position: relative; height: 62px; flex: none; display: flex; background: #f2f2f2; border-top: 3px solid #d4d4d4; border-bottom: 2px solid #444; }
.playback { width: 175px; flex: none; display: flex; gap: 15px; padding: 19px 0 0 12px; align-items: flex-start; }
.pb { width: 16px; height: 19px; flex: none; }
.track { position: relative; width: 900px; padding: 8px 0 0 3px; }
.segs { display: flex; gap: 5px; height: 7px; }
.seg { height: 7px; flex: none; }
.seg.end { margin-right: 2px; }
.w23 { width: 23px; } .w25 { width: 25px; } .w55 { width: 55px; } .w83 { width: 83px; } .w115 { width: 115px; } .w141 { width: 141px; }
.feats { display: flex; margin: 3px 0 0 -3px; height: 22px; }
.ft { width: 20px; height: 20px; margin: 0 5px; flex: none; }
.ft.tall { height: 24px; margin-top: 0; }
.ruler { margin: 3px 0 0 12px; width: 872px; height: 8px; border-bottom: 2px solid #d8d8d8; background: repeating-linear-gradient(90deg, #c4c4c4 0 1px, transparent 1px 30px); }
.marker { position: absolute; left: 893px; top: 7px; width: 15px; height: 40px; }
.tl-gear { position: absolute; right: 10px; top: 21px; width: 20px; height: 20px; }
.foot { height: 11px; flex: none; background: #fff; }

.ink { position: absolute; inset: 0; width: 1911px; height: 1055px; pointer-events: none; }
.ink path { fill: none; stroke: #e01212; stroke-width: 2; stroke-linecap: round; stroke-linejoin: round; }
```
